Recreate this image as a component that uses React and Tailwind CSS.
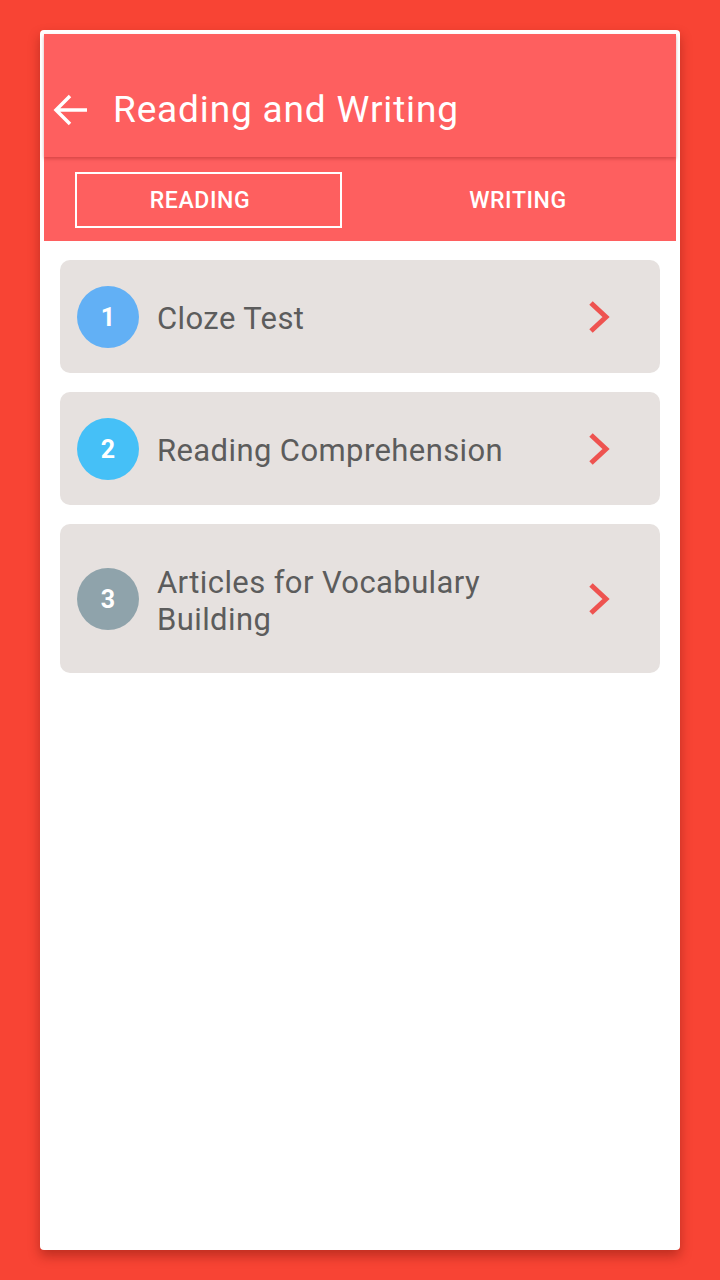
import React from "react";

const items = [
  { n: 1, label: "Cloze Test", color: "bg-[#62b0f5]", h: "h-[113px]" },
  { n: 2, label: "Reading Comprehension", color: "bg-[#45c0f7]", h: "h-[113px]" },
  { n: 3, label: "Articles for Vocabulary Building", color: "bg-[#8fa3ab]", h: "h-[149px]" },
];

function Chevron() {
  return (
    <svg width="26" height="36" viewBox="0 0 26 36" className="shrink-0">
      <path d="M5 4 L20 18 L5 32" fill="none" stroke="#ee5350" strokeWidth="5" strokeLinecap="butt" />
    </svg>
  );
}

export default function App() {
  return (
    <div className="w-[720px] h-[1280px] bg-[#f84434] pt-[30px] px-[40px] font-['Roboto',sans-serif]">
      <div className="w-[640px] h-[1220px] bg-white rounded-[4px] p-[4px] shadow-[0_6px_12px_rgba(120,20,10,0.45)] flex flex-col">
        <div className="h-[123px] bg-[#fe5f5f] flex items-center pt-[28px] relative z-10 shadow-[0_2px_3px_rgba(150,30,30,0.35)]">
          <svg width="38" height="34" viewBox="0 0 38 34" className="ml-[8px]">
            <path d="M35 17 H5 M18 3 L4 17 L18 31" fill="none" stroke="white" strokeWidth="3.5" />
          </svg>
          <span className="ml-[23px] text-white text-[37px] leading-none tracking-[0.85px]">Reading and Writing</span>
        </div>
        <div className="h-[84px] bg-[#fe5f5f] flex">
          <div className="w-[316px] h-full flex items-start pl-[31px] pt-[15px]">
            <div className="w-[267px] h-[56px] border-2 border-white flex items-center justify-center pr-[17px] pt-[3px]">
              <span className="text-white text-[23px] font-medium tracking-[0.6px]">READING</span>
            </div>
          </div>
          <div className="flex-1 h-full flex items-center justify-center pt-[5px]">
            <span className="text-white text-[23px] font-medium tracking-[0.6px]">WRITING</span>
          </div>
        </div>
        <div className="flex flex-col gap-[19px] px-[16px] pt-[19px]">
          {items.map((it) => (
            <div key={it.n} className={`${it.h} bg-[#e6e1df] rounded-[10px] flex items-center pl-[17px] pr-[48px]`}>
              <div className={`w-[62px] h-[62px] rounded-full ${it.color} flex items-center justify-center shrink-0 pt-[3px]`}>
                <span className="text-white text-[25px] font-bold">{it.n}</span>
              </div>
              <span className="ml-[18px] flex-1 text-[#5c5c5c] text-[31px] leading-[37px] tracking-[0.4px] pr-[60px] pt-[4px]">{it.label}</span>
              <Chevron />
            </div>
          ))}
        </div>
      </div>
    </div>
  );
}
